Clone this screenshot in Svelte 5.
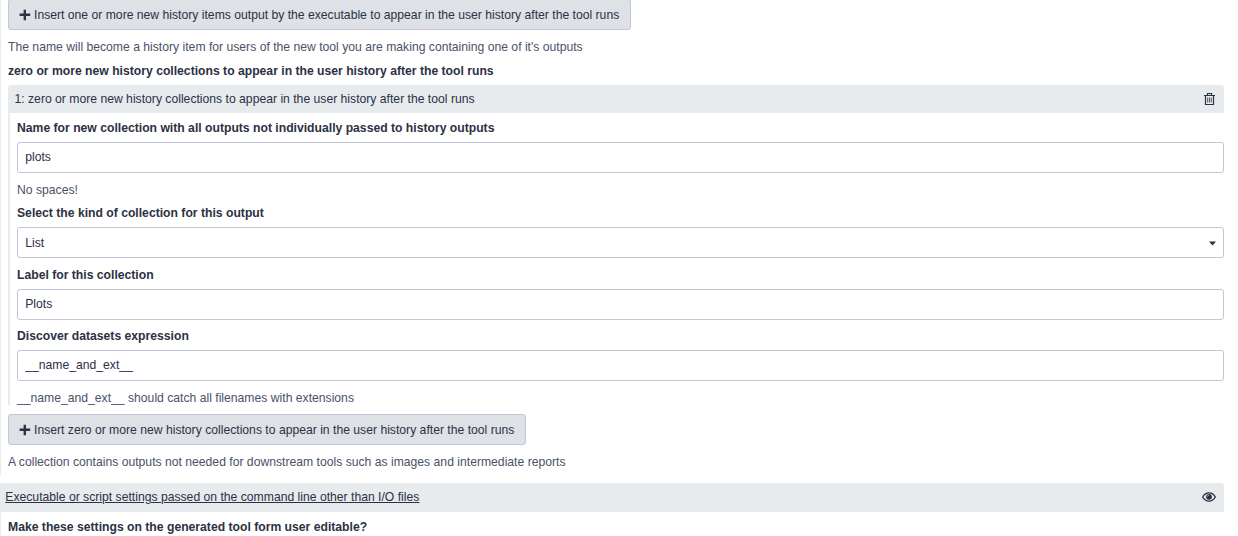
<script>
  let collectionName = $state('plots');
  let label = $state('Plots');
  let expression = $state('__name_and_ext__');
</script>

{#snippet plus()}
  <svg class="plus" viewBox="0 0 12 12" aria-hidden="true"><path d="M4.600.700h2.400v3.900h4.200v2.400H7v4.200H4.600V7H.600V4.600h4z" /></svg>
{/snippet}

<main>
  <section class="outer">
    <button class="first">{@render plus()}<span>Insert one or more new history items output by the executable to appear in the user history after the tool runs</span></button>
    <p class="help">The name will become a history item for users of the new tool you are making containing one of it's outputs</p>
    <h4 class="title">zero or more new history collections to appear in the user history after the tool runs</h4>

    <div class="repeat">
      <header>
        <span>1: zero or more new history collections to appear in the user history after the tool runs</span>
        <svg class="trash" viewBox="0 0 11 14" aria-hidden="true">
          <path class="can" d="M0 3.500h11M3.500 3V1.500h4V3M1.500 3.500v9h8v-9" />
          <path d="M3.700 5.500v5M5.500 5.500v5M7.300 5.500v5" />
        </svg>
      </header>
      <div class="fields">
        <label for="name">Name for new collection with all outputs not individually passed to history outputs</label>
        <input id="name" bind:value={collectionName} />
        <p class="help">No spaces!</p>
        <label for="kind" class="after-help">Select the kind of collection for this output</label>
        <div id="kind" class="select">
          <span>List</span>
          <svg viewBox="0 0 7 5" aria-hidden="true"><path d="M0 .500h7L3.500 4.600z" /></svg>
        </div>
        <label for="label" class="after-select">Label for this collection</label>
        <input id="label" bind:value={label} />
        <label for="expr" class="after-input">Discover datasets expression</label>
        <input id="expr" bind:value={expression} />
        <p class="help">__name_and_ext__ should catch all filenames with extensions</p>
      </div>
    </div>

    <button class="second">{@render plus()}<span>Insert zero or more new history collections to appear in the user history after the tool runs</span></button>
    <p class="help">A collection contains outputs not needed for downstream tools such as images and intermediate reports</p>
  </section>

  <section class="settings">
    <header>
      <a href="#settings">Executable or script settings passed on the command line other than I/O files</a>
      <svg class="eye" viewBox="0 0 14 10" aria-hidden="true">
        <path class="lid" d="M.7 5C2.2 2.3 4.4.9 7 .9s4.800 1.400 6.300 4.100C11.800 7.700 9.600 9.100 7 9.100S2.200 7.700.7 5z" />
        <circle cx="7" cy="4.800" r="2.900" />
        <path class="glint" d="M5.500 4.600Q5.500 3.300 6.800 3.200" />
      </svg>
    </header>
    <h4>Make these settings on the generated tool form user editable?</h4>
  </section>
</main>

<style>
  :global(body) {
    margin: 0;
    background: #fff;
    overflow: hidden;
  }
  main {
    box-sizing: border-box;
    width: 1224px;
    height: 536px;
    overflow: hidden;
    color: #2c3143;
    font: 12.187px/18px "Liberation Sans", Arial, sans-serif;
  }
  .outer {
    box-sizing: border-box;
    display: flow-root;
    height: 476px;
    padding-left: 7px;
    border-left: 1px solid #e7ebee;
    border-bottom-left-radius: 3px;
  }
  button {
    box-sizing: border-box;
    display: flex;
    align-items: center;
    height: 31px;
    padding: 0 10px;
    border: 1px solid #c3c6d8;
    border-radius: 3px;
    background: #dee2e6;
    color: inherit;
    font: inherit;
    white-space: nowrap;
  }
  .first {
    width: 623px;
    margin: -1px 0 0;
  }
  .second {
    width: 518px;
    margin: 8px 0 0;
  }
  .plus {
    flex: none;
    width: 12px;
    height: 12px;
    margin-right: 3px;
    fill: #2c3143;
  }
  .help {
    margin: 8px 0 0;
    color: #4b5169;
  }
  h4,
  label {
    display: block;
    margin: 0;
    font-size: 12.18px;
    font-weight: bold;
  }
  .title {
    margin: 6px 0 5px;
  }
  header {
    display: flex;
    align-items: center;
    justify-content: space-between;
    background: #e7ebee;
  }
  .repeat {
    height: 321px;
  }
  .repeat header {
    height: 28px;
    padding: 0 9px 0 6.500px;
    border-radius: 3px 3px 0 0;
  }
  .trash {
    width: 11px;
    height: 14px;
    fill: none;
    stroke: #2c3143;
    stroke-width: 0.8;
  }
  .trash .can {
    stroke-width: 1.2;
  }
  .fields {
    box-sizing: border-box;
    height: 293px;
    padding: 6px 0 0 7px;
    border-left: 2px solid #e7ebee;
    border-bottom-left-radius: 3px;
  }
  input,
  .select {
    box-sizing: border-box;
    width: 100%;
    height: 31px;
    margin: 5px 0 0;
    padding: 0 7.200px;
    border: 1px solid #c3c6d8;
    border-radius: 3px;
    background: #fff;
    color: inherit;
    font: inherit;
    outline: none;
  }
  input {
    display: block;
    padding-bottom: 2px;
  }
  .select {
    display: flex;
    align-items: center;
    justify-content: space-between;
    padding-right: 7px;
  }
  .select svg {
    width: 7px;
    height: 5px;
    margin-top: 2px;
    fill: #2c3143;
  }
  .after-help {
    margin-top: 5px;
  }
  .after-select {
    margin-top: 8px;
  }
  .after-input {
    margin-top: 7px;
  }
  .settings {
    margin-top: 7px;
  }
  .settings header {
    box-sizing: border-box;
    height: 29px;
    padding: 0 8px 1px 5.300px;
    border-radius: 0 3px 0 0;
  }
  a {
    color: inherit;
    text-decoration: underline;
  }
  .eye {
    width: 14px;
    height: 10px;
    fill: #2c3143;
  }
  .eye .lid {
    fill: none;
    stroke: #2c3143;
    stroke-width: 1.4;
  }
  .eye .glint {
    fill: none;
    stroke: #e7ebee;
    stroke-width: 0.7;
  }
  .settings h4 {
    padding: 6px 0 0 7px;
    border-left: 1px solid #e7ebee;
  }
</style>
